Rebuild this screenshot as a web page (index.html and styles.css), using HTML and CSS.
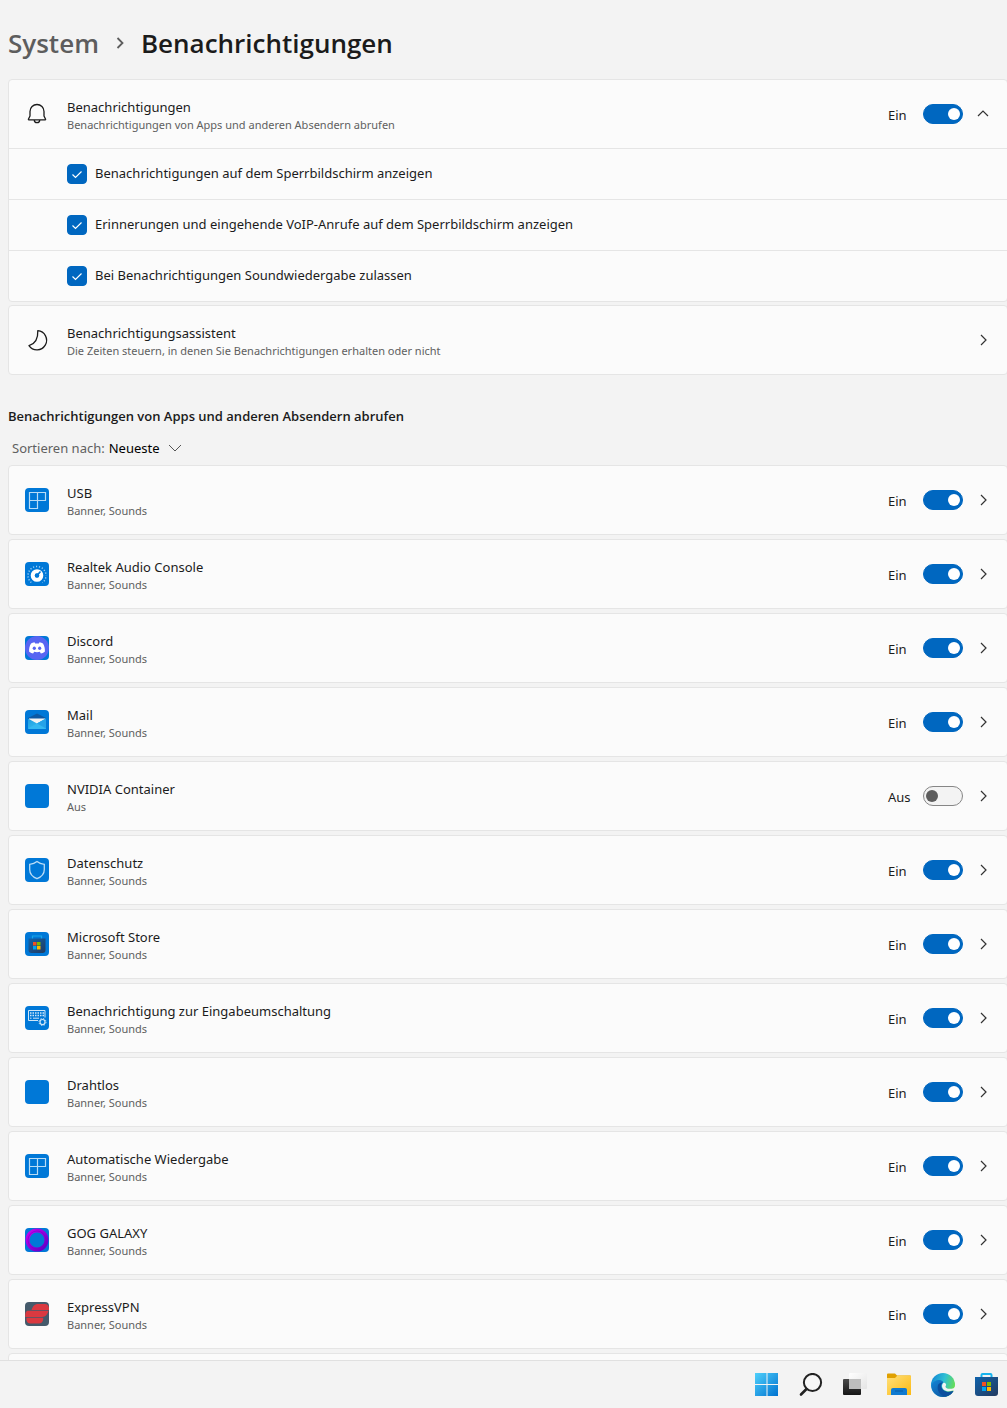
FILE: index.html
```html
<!DOCTYPE html>
<html lang="de">
<head>
    <meta charset="UTF-8">
    <meta name="viewport" content="width=device-width, initial-scale=1.0">
    <title>Benachrichtigungen</title>
    <link rel="stylesheet" href="styles.css">
</head>
<body>
    <!-- shared icons -->
    <svg class="defs" width="0" height="0" aria-hidden="true">
        <defs>
            <linearGradient id="bag" x1="0" y1="0" x2="1" y2="1"><stop offset="0" stop-color="#0f62ab"/><stop offset="1" stop-color="#243a5e"/></linearGradient>
            <linearGradient id="win" x1="0" y1="0" x2="1" y2="1"><stop offset="0" stop-color="#4fd0fb"/><stop offset="1" stop-color="#0072d0"/></linearGradient>
            <linearGradient id="ring" x1="0" y1="0" x2="1" y2="1"><stop offset="0" stop-color="#c800f0"/><stop offset="1" stop-color="#5a00c8"/></linearGradient>
            <linearGradient id="envelope" x1="0" y1="0" x2="1" y2="1"><stop offset="0" stop-color="#1f9be0"/><stop offset="1" stop-color="#3cc8f5"/></linearGradient>
            <linearGradient id="folder" x1="0" y1="0" x2="1" y2="1"><stop offset="0" stop-color="#ffe07a"/><stop offset="1" stop-color="#fcb912"/></linearGradient>
            <linearGradient id="dark" x1="0" y1="0" x2="0" y2="1"><stop offset="0" stop-color="#4a4a4a"/><stop offset="1" stop-color="#151515"/></linearGradient>
            <linearGradient id="pane" x1="0" y1="0" x2="1" y2="1"><stop offset="0" stop-color="#ffffff"/><stop offset="1" stop-color="#e4e4e4"/></linearGradient>
            <linearGradient id="edgeTop" x1="0" y1="0.3" x2="1" y2="0.6"><stop offset="0" stop-color="#1489d4"/><stop offset="0.5" stop-color="#2fc0d4"/><stop offset="1" stop-color="#6be04b"/></linearGradient>
            <linearGradient id="edgeLow" x1="0" y1="0" x2="1" y2="1"><stop offset="0" stop-color="#1485d6"/><stop offset="1" stop-color="#0c4a94"/></linearGradient>
        </defs>
        <symbol id="chevron" viewBox="0 0 12 12"><path d="M4 1l5 5-5 5" fill="none" stroke="#333" stroke-width="1.2"/></symbol>
        <symbol id="tiles" viewBox="0 0 24 24"><path d="M4.500 4.500h16v8h-8v8h-8zM12.500 4.500v8M4.500 12.500h8" fill="none" stroke="#b9dcf6" stroke-width="1.200"/></symbol>
    </svg>

    <main class="settings">
        <h1 class="breadcrumb">
            <a href="#">System</a>
            <svg width="12" height="14" viewBox="0 0 12 14" aria-hidden="true"><path d="M3.500 2l5 5-5 5" fill="none" stroke="#5d5d5d" stroke-width="1.800"/></svg>
            <span>Benachrichtigungen</span>
        </h1>

        <section class="card">
            <div class="row">
                <svg class="icon" viewBox="0 0 24 24" aria-hidden="true"><g fill="none" stroke="#1b1b1b" stroke-width="1.300" stroke-linejoin="round"><path d="M5 9.500a7 7 0 0 1 14 0v4.500l1.600 3.300a.4.4 0 0 1-.4.600H3.800a.4.4 0 0 1-.4-.6L5 14z"/><path d="M9.300 18a2.700 2.700 0 0 0 5.400 0"/></g></svg>
                <div class="text">
                    <label class="name" for="all">Benachrichtigungen</label>
                    <span class="info">Benachrichtigungen von Apps und anderen Absendern abrufen</span>
                </div>
                <span class="state">Ein</span>
                <input class="toggle" type="checkbox" role="switch" id="all" checked>
                <button class="more up" aria-label="Reduzieren"><svg><use href="#chevron"/></svg></button>
            </div>
            <div class="option"><input class="check" type="checkbox" id="lock" checked><label for="lock">Benachrichtigungen auf dem Sperrbildschirm anzeigen</label></div>
            <div class="option"><input class="check" type="checkbox" id="voip" checked><label for="voip">Erinnerungen und eingehende VoIP-Anrufe auf dem Sperrbildschirm anzeigen</label></div>
            <div class="option"><input class="check" type="checkbox" id="sound" checked><label for="sound">Bei Benachrichtigungen Soundwiedergabe zulassen</label></div>
        </section>

        <section class="card">
            <div class="row">
                <svg class="icon" viewBox="0 0 24 24" aria-hidden="true"><path d="M12.800 2.700A9.600 9.600 0 1 1 4 17.600c5.500-1.600 9.200-5.800 8.800-14.900z" fill="none" stroke="#1b1b1b" stroke-width="1.300" stroke-linejoin="round"/></svg>
                <div class="text">
                    <span class="name">Benachrichtigungsassistent</span>
                    <span class="info">Die Zeiten steuern, in denen Sie Benachrichtigungen erhalten oder nicht</span>
                </div>
                <button class="more" aria-label="Benachrichtigungsassistent"><svg><use href="#chevron"/></svg></button>
            </div>
        </section>

        <h2>Benachrichtigungen von Apps und anderen Absendern abrufen</h2>
        <div class="sort">
            <label for="sort">Sortieren nach:</label>
            <select id="sort"><option>Neueste</option></select>
        </div>

        <ul class="apps">
            <li class="card row">
                <svg class="icon tile" viewBox="0 0 24 24" aria-hidden="true"><use href="#tiles"/></svg>
                <div class="text"><label class="name" for="usb">USB</label><span class="info">Banner, Sounds</span></div>
                <span class="state">Ein</span>
                <input class="toggle" type="checkbox" role="switch" id="usb" checked>
                <button class="more" aria-label="USB"><svg><use href="#chevron"/></svg></button>
            </li>
            <li class="card row">
                <svg class="icon tile" viewBox="0 0 24 24" aria-hidden="true"><circle cx="12" cy="13.500" r="9" fill="none" stroke="#9fd0f4" stroke-width="1.400" stroke-dasharray="1 1.570" pathLength="48" stroke-dashoffset="24"/><path d="M4 24L12 13.500 20 24z" fill="#0078d7"/><circle cx="12" cy="13.500" r="4.300" fill="none" stroke="#fff" stroke-width="4"/><path d="M12 13.500L15.500 9.500" stroke="#0078d7" stroke-width="1.600"/><circle cx="12" cy="13.500" r="2" fill="#0078d7"/></svg>
                <div class="text"><label class="name" for="realtek">Realtek Audio Console</label><span class="info">Banner, Sounds</span></div>
                <span class="state">Ein</span>
                <input class="toggle" type="checkbox" role="switch" id="realtek" checked>
                <button class="more" aria-label="Realtek Audio Console"><svg><use href="#chevron"/></svg></button>
            </li>
            <li class="card row">
                <svg class="icon tile" viewBox="0 0 24 24" aria-hidden="true"><circle cx="12" cy="12" r="12" fill="#5865f2"/><path d="M9.500 6.300c-1.400.2-2.600.6-3.500 1.100C4.400 10 3.800 13 4.200 15.800c1.300 1 2.700 1.600 3.900 1.800l1.100-1.800c1.900.5 3.700.5 5.600 0l1.100 1.800c1.200-.2 2.600-.8 3.900-1.800.4-2.800-.2-5.800-1.800-8.400-.9-.5-2.100-.9-3.500-1.100l-.7 1.200h-3.600z" fill="#fff"/><ellipse cx="9.300" cy="12.300" rx="1.600" ry="1.800" fill="#5865f2"/><ellipse cx="14.700" cy="12.300" rx="1.600" ry="1.800" fill="#5865f2"/></svg>
                <div class="text"><label class="name" for="discord">Discord</label><span class="info">Banner, Sounds</span></div>
                <span class="state">Ein</span>
                <input class="toggle" type="checkbox" role="switch" id="discord" checked>
                <button class="more" aria-label="Discord"><svg><use href="#chevron"/></svg></button>
            </li>
            <li class="card row">
                <svg class="icon tile" viewBox="0 0 24 24" aria-hidden="true"><path d="M3 8l9-4.500L21 8v3H3z" fill="#0c59a4"/><path d="M4 8.500h16v6H4z" fill="#f3f3f3"/><path d="M3 8.500l9 5 9-5V18a1 1 0 0 1-1 1H4a1 1 0 0 1-1-1z" fill="url(#envelope)"/><path d="M3 18.500l9-5 9-5V18a1 1 0 0 1-1 1H4z" fill="#35b8f1"/><path d="M12 13.500l9 5V8.500z" fill="#25a2e8"/></svg>
                <div class="text"><label class="name" for="mail">Mail</label><span class="info">Banner, Sounds</span></div>
                <span class="state">Ein</span>
                <input class="toggle" type="checkbox" role="switch" id="mail" checked>
                <button class="more" aria-label="Mail"><svg><use href="#chevron"/></svg></button>
            </li>
            <li class="card row">
                <svg class="icon tile" viewBox="0 0 24 24" aria-hidden="true"></svg>
                <div class="text"><label class="name" for="nvidia">NVIDIA Container</label><span class="info">Aus</span></div>
                <span class="state">Aus</span>
                <input class="toggle" type="checkbox" role="switch" id="nvidia">
                <button class="more" aria-label="NVIDIA Container"><svg><use href="#chevron"/></svg></button>
            </li>
            <li class="card row">
                <svg class="icon tile" viewBox="0 0 24 24" aria-hidden="true"><path d="M12 3.500c2 1.700 4.300 2.600 7.300 2.800v5.200c0 4.300-2.400 7.200-7.300 9.200-4.900-2-7.300-4.900-7.300-9.200V6.300c3-.2 5.300-1.100 7.300-2.800z" fill="none" stroke="#b9dcf6" stroke-width="1.300"/></svg>
                <div class="text"><label class="name" for="privacy">Datenschutz</label><span class="info">Banner, Sounds</span></div>
                <span class="state">Ein</span>
                <input class="toggle" type="checkbox" role="switch" id="privacy" checked>
                <button class="more" aria-label="Datenschutz"><svg><use href="#chevron"/></svg></button>
            </li>
            <li class="card row">
                <svg class="icon tile" viewBox="0 0 24 24" aria-hidden="true"><path d="M7.500 7V4h9v3" fill="none" stroke="#16a5e8" stroke-width="1.200"/><path d="M3.500 6.500h17V18a3 3 0 0 1-3 3h-11a3 3 0 0 1-3-3z" fill="url(#bag)"/><path d="M8 10h3.500v3.500H8z" fill="#f25022"/><path d="M12 10h3.500v3.500H12z" fill="#7fba00"/><path d="M8 14h3.500v3.500H8z" fill="#00a4ef"/><path d="M12 14h3.500v3.500H12z" fill="#ffb900"/></svg>
                <div class="text"><label class="name" for="store">Microsoft Store</label><span class="info">Banner, Sounds</span></div>
                <span class="state">Ein</span>
                <input class="toggle" type="checkbox" role="switch" id="store" checked>
                <button class="more" aria-label="Microsoft Store"><svg><use href="#chevron"/></svg></button>
            </li>
            <li class="card row">
                <svg class="icon tile" viewBox="0 0 24 24" aria-hidden="true"><g fill="none" stroke="#cfe6f8"><path d="M13 14.500H3.500v-10h16.500v7"/><path d="M5 7h14M5 9.500h14" stroke-dasharray="1.500 1" stroke-width="1.300"/><path d="M5 12.200h1.500M8 12.200h6"/><circle cx="17.500" cy="16" r="2.500" stroke-width="1.200"/><circle cx="17.500" cy="16" r="3.500" stroke-dasharray="1.400 1.350"/></g></svg>
                <div class="text"><label class="name" for="input">Benachrichtigung zur Eingabeumschaltung</label><span class="info">Banner, Sounds</span></div>
                <span class="state">Ein</span>
                <input class="toggle" type="checkbox" role="switch" id="input" checked>
                <button class="more" aria-label="Benachrichtigung zur Eingabeumschaltung"><svg><use href="#chevron"/></svg></button>
            </li>
            <li class="card row">
                <svg class="icon tile" viewBox="0 0 24 24" aria-hidden="true"></svg>
                <div class="text"><label class="name" for="wireless">Drahtlos</label><span class="info">Banner, Sounds</span></div>
                <span class="state">Ein</span>
                <input class="toggle" type="checkbox" role="switch" id="wireless" checked>
                <button class="more" aria-label="Drahtlos"><svg><use href="#chevron"/></svg></button>
            </li>
            <li class="card row">
                <svg class="icon tile" viewBox="0 0 24 24" aria-hidden="true"><use href="#tiles"/></svg>
                <div class="text"><label class="name" for="autoplay">Automatische Wiedergabe</label><span class="info">Banner, Sounds</span></div>
                <span class="state">Ein</span>
                <input class="toggle" type="checkbox" role="switch" id="autoplay" checked>
                <button class="more" aria-label="Automatische Wiedergabe"><svg><use href="#chevron"/></svg></button>
            </li>
            <li class="card row">
                <svg class="icon tile" viewBox="0 0 24 24" aria-hidden="true"><circle cx="12" cy="12" r="9.500" fill="none" stroke="url(#ring)" stroke-width="4"/><circle cx="12" cy="12" r="9" fill="none" stroke="#7a00c4" stroke-width=".6"/></svg>
                <div class="text"><label class="name" for="gog">GOG GALAXY</label><span class="info">Banner, Sounds</span></div>
                <span class="state">Ein</span>
                <input class="toggle" type="checkbox" role="switch" id="gog" checked>
                <button class="more" aria-label="GOG GALAXY"><svg><use href="#chevron"/></svg></button>
            </li>
            <li class="card row">
                <svg class="icon tile slate" viewBox="0 0 24 24" aria-hidden="true"><g fill="#da3940"><path d="M6.500 8C8 3.500 10 2 13.500 2h6C22.500 2 24 4 24 6.500c0 .5 0 1-.1 1.500z"/><path d="M2.500 8.700h21c-1 4-3 5.800-6.500 6.300H.3c-.3-3.300.3-5.800 2.200-6.300z"/><path d="M1.500 15.800h16.700c.3 3.300-1.300 5.700-4 5.700H5c-2.700 0-4-2.400-3.500-5.700z"/></g></svg>
                <div class="text"><label class="name" for="vpn">ExpressVPN</label><span class="info">Banner, Sounds</span></div>
                <span class="state">Ein</span>
                <input class="toggle" type="checkbox" role="switch" id="vpn" checked>
                <button class="more" aria-label="ExpressVPN"><svg><use href="#chevron"/></svg></button>
            </li>
            <li class="card row"></li>
        </ul>
    </main>

    <nav class="taskbar">
        <button aria-label="Start"><svg viewBox="0 0 24 24"><path d="M0 0h11.500v11H0zM12.500 0H23v11H12.500zM0 12h11.500v11H0zM12.500 12H23v11H12.500z" fill="url(#win)"/></svg></button>
        <button aria-label="Suchen"><svg viewBox="0 0 24 24"><g fill="none" stroke="#222"><circle cx="13.500" cy="9.500" r="8.600" fill="#f7f7f7" stroke-width="2"/><path d="M7.500 16l-5.500 5.500" stroke-width="2.600" stroke-linecap="round"/></g></svg></button>
        <button aria-label="Taskansicht"><svg viewBox="0 0 24 24"><rect y="6" width="18" height="16" rx="1" fill="url(#dark)"/><rect x="6" width="18" height="16" rx="1" fill="url(#pane)"/><path d="M6 6h12v10H7a1 1 0 0 1-1-1z" fill="#bdbdbd"/></svg></button>
        <button aria-label="Explorer"><svg viewBox="0 0 24 24"><path d="M0 1.500A1 1 0 0 1 1 .5h7l2 2h13a1 1 0 0 1 1 1V8H0z" fill="#e0a000"/><path d="M0 5h8l2.500-2.500H23a1 1 0 0 1 1 1V22H0z" fill="url(#folder)"/><path d="M4 22v-5a2 2 0 0 1 2-2h12a2 2 0 0 1 2 2v5z" fill="#0f7ad0"/><path d="M8 17.500h8v1H8z" fill="#0a5ba3"/></svg></button>
        <button aria-label="Edge"><svg viewBox="0 0 24 24"><circle cx="12" cy="12" r="12" fill="url(#edgeTop)"/><path d="M.5 12C2 8 6 6.500 9 7c2 .4 3 1.500 3.500 2.500-3 1.500-3.300 4.500-1.500 7 2 2.500 6.500 3.500 11.500 1.500C20 22 16 24 12 24 5 24 0 18 .5 12z" fill="url(#edgeLow)"/><path d="M7 12c-1.500 5.500 2 10.500 7.500 11.500 3.500-.5 6.500-2.500 8-5.500-6 2-11 0-12-4-.4-1.800 0-3.300 1-4.500-2 .2-3.800 1-4.500 2.500z" fill="#0c4f9e"/><path d="M12.500 9.800c-2 1.500-2 4.700 0 6.700 2.500 2.200 6.500 2.200 9.500 1l2 .5v-4.500c-.3.700-.8 1.300-1.500 1.700-2.500.9-5.500.9-7.200-.2-1-.7-1-1.500-.4-2.400.9-1.500-.9-3.400-2.400-2.800z" fill="#f3f3f3"/></svg></button>
        <button aria-label="Microsoft Store"><svg viewBox="0 0 24 24"><path d="M6.500 5V2a1 1 0 0 1 1-1h8a1 1 0 0 1 1 1v3" fill="none" stroke="#16b4ee" stroke-width="2"/><path d="M0 4h23v16a3 3 0 0 1-3 3H3a3 3 0 0 1-3-3z" fill="url(#bag)"/><path d="M7 9h4v4H7z" fill="#f25022"/><path d="M12 9h4v4h-4z" fill="#7fba00"/><path d="M7 14h4v4H7z" fill="#00a4ef"/><path d="M12 14h4v4h-4z" fill="#ffb900"/></svg></button>
    </nav>
</body>
</html>
```
FILE: styles.css
```css
* { box-sizing: border-box; }
body { margin: 0; height: 100vh; display: flex; flex-direction: column; background: #f3f3f3; color: #1b1b1b; font: 13px/20px "Segoe UI", "Noto Sans", sans-serif; }
button, select { font: inherit; color: inherit; border: 0; background: none; padding: 0; cursor: pointer; }
.defs { position: absolute; }

.settings { flex: 1; min-height: 0; overflow: hidden; padding: 23px 0 0 8px; }
.breadcrumb { display: flex; align-items: center; gap: 15px; margin: 0 0 16px; font-family: "Segoe UI", "Open Sans", sans-serif; font-size: 26px; line-height: 40px; font-weight: 600; }
.breadcrumb a { color: #5d5d5d; text-decoration: none; }

.card { background: #fbfbfb; border: 1px solid #e5e5e5; border-radius: 4px; margin: 0 -1px 4px 0; }
section.card { margin-bottom: 3px; }
.row { display: flex; align-items: center; min-height: 68px; padding: 0 14px 0 16px; }
.icon { width: 24px; height: 24px; margin-right: 18px; flex: none; }
.tile { background: #0078d7; border-radius: 4px; }
.slate { background: #455a6b; }
.text { flex: 1; display: flex; flex-direction: column; padding-top: 1px; }
.name { line-height: 20px; }
.info { font-size: 11px; line-height: 16px; color: #606060; }
.state { width: 35px; padding-top: 2px; }

.toggle { appearance: none; width: 40px; height: 20px; margin: 0 10px 0 0; border: 1px solid #868686; border-radius: 10px; background: #f3f3f3; display: flex; align-items: center; padding: 0 2px; }
.toggle::before { content: ""; width: 12px; height: 12px; border-radius: 50%; background: #5d5d5d; }
.toggle:checked { background: #0067c0; border-color: #0067c0; justify-content: flex-end; }
.toggle:checked::before { background: #fff; }

.more { width: 20px; height: 20px; display: flex; align-items: center; justify-content: center; }
.more svg { width: 12px; height: 12px; }
.up svg { transform: rotate(-90deg); }

.option { display: flex; align-items: center; height: 51px; padding-left: 58px; border-top: 1px solid #e5e5e5; }
.option label { padding-bottom: 2px; }
.check { appearance: none; width: 20px; height: 20px; margin: 0 8px 0 0; border: 1px solid #868686; border-radius: 4px; }
.check:checked { border-color: #0067c0; background: #0067c0 url("data:image/svg+xml,%3Csvg xmlns='http://www.w3.org/2000/svg' viewBox='0 0 18 18'%3E%3Cpath d='M4.500 9.500l3 3 6-6' fill='none' stroke='white' stroke-width='1.200'/%3E%3C/svg%3E"); }

h2 { margin: 31px 0 12px; font-family: "Segoe UI", "Open Sans", sans-serif; font-size: 13px; line-height: 20px; font-weight: 600; }
.sort { display: flex; gap: 4px; padding-left: 4px; margin-bottom: 7px; color: #606060; }
.sort select { appearance: none; padding-right: 21px; color: #000; background: url("data:image/svg+xml,%3Csvg xmlns='http://www.w3.org/2000/svg' width='12' height='12'%3E%3Cpath d='M0 3l6 6 6-6' fill='none' stroke='%23555'/%3E%3C/svg%3E") right center no-repeat; }

.apps { list-style: none; margin: 0; padding: 0; }
.apps .row { min-height: 70px; }

.taskbar { display: flex; justify-content: flex-end; gap: 4px; height: 48px; border-top: 1px solid #e0e0e0; background: #f3f3f3; }
.taskbar button { width: 40px; display: flex; align-items: center; justify-content: center; }
.taskbar svg { width: 24px; height: 24px; }
```
